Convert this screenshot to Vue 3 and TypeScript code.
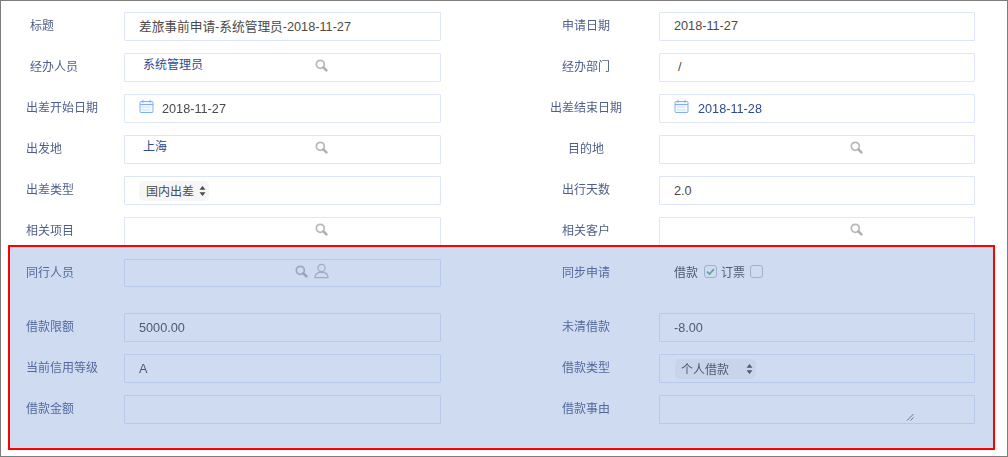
<script setup lang="ts">
type Kind = 'text' | 'lookup' | 'date' | 'select' | 'checks' | 'area' | 'people'
interface Field {
  label: string
  kind: Kind
  value?: string
  labelClass?: string
  valueClass?: string
}

const top: Field[] = [
  { label: '标题', kind: 'text', value: '差旅事前申请-系统管理员-2018-11-27', labelClass: 'inset', valueClass: 'raised' },
  { label: '申请日期', kind: 'text', value: '2018-11-27', valueClass: 'nudged' },
  { label: '经办人员', kind: 'lookup', value: '系统管理员', labelClass: 'inset' },
  { label: '经办部门', kind: 'text', value: '/', valueClass: 'slash' },
  { label: '出差开始日期', kind: 'date', value: '2018-11-27' },
  { label: '出差结束日期', kind: 'date', value: '2018-11-28', valueClass: 'blue' },
  { label: '出发地', kind: 'lookup', value: '上海' },
  { label: '目的地', kind: 'lookup' },
  { label: '出差类型', kind: 'select', value: '国内出差' },
  { label: '出行天数', kind: 'text', value: '2.0' },
  { label: '相关项目', kind: 'lookup' },
  { label: '相关客户', kind: 'lookup' },
  { label: '同行人员', kind: 'people' },
  { label: '同步申请', kind: 'checks' },
]
const bottom: Field[] = [
  { label: '借款限额', kind: 'text', value: '5000.00' },
  { label: '未清借款', kind: 'text', value: '-8.00' },
  { label: '当前信用等级', kind: 'text', value: 'A' },
  { label: '借款类型', kind: 'select', value: '个人借款', valueClass: 'wide' },
  { label: '借款金额', kind: 'text' },
  { label: '借款事由', kind: 'area' },
]
const sections = [
  { id: 'top', fields: top },
  { id: 'bottom', fields: bottom },
]
</script>

<template>
  <div class="page">
    <section v-for="s in sections" :key="s.id" class="grid" :class="s.id">
      <template v-for="(f, i) in s.fields" :key="f.label">
        <div class="label" :class="[i % 2 ? 'right' : 'left', f.labelClass]">{{ f.label }}</div>

        <div v-if="f.kind === 'checks'" class="checks">
          <span>借款</span>
          <span class="box first"><svg viewBox="0 0 13 13" width="13" height="13"><path d="M3 6.6 5.5 9 10 4.2" fill="none" stroke="#5cb87a" stroke-width="1.7" /></svg></span>
          <span class="second">订票</span>
          <span class="box"></span>
        </div>

        <div v-else class="input">
          <template v-if="f.kind === 'text'">
            <span class="value" :class="f.valueClass">{{ f.value }}</span>
          </template>

          <template v-else-if="f.kind === 'lookup' || f.kind === 'people'">
            <span class="link">{{ f.value }}</span>
            <svg class="search" :class="{ shifted: f.kind === 'people' }" viewBox="0 0 13 13" width="13" height="13">
              <circle cx="5.3" cy="5.3" r="4" fill="none" stroke="#b8b8b8" stroke-width="1.7" />
              <path d="M8.4 8.4 11.4 11.4" stroke="#b0b0b0" stroke-width="2.6" stroke-linecap="round" />
            </svg>
            <svg v-if="f.kind === 'people'" class="person" viewBox="0 0 15 16" width="15" height="16">
              <circle cx="7.5" cy="5" r="3.6" fill="none" stroke="#bcbcbc" stroke-width="1.2" />
              <path d="M1 14.6c0-3 2.2-4.8 4.3-5.3h4.4c2.1.5 4.3 2.3 4.3 5.3z" fill="none" stroke="#bcbcbc" stroke-width="1.2" />
            </svg>
          </template>

          <template v-else-if="f.kind === 'date'">
            <svg class="calendar" viewBox="0 0 15 15" width="15" height="15">
              <rect x="1" y="2.5" width="13" height="11" rx="1" fill="#f3f8ff" stroke="#7fb0f7" />
              <path d="M1 5.5h13" stroke="#7fb0f7" />
              <path d="M4 .8v3M11 .8v3" stroke="#7fb0f7" />
              <path d="M3.5 8h8M3.5 11h8" stroke="#a9c9f8" stroke-dasharray="1 1" />
            </svg>
            <span class="date" :class="f.valueClass">{{ f.value }}</span>
          </template>

          <template v-else-if="f.kind === 'select'">
            <span class="select" :class="f.valueClass">
              <span class="select-text">{{ f.value }}</span>
              <svg viewBox="0 0 7 10" width="7" height="10"><path d="M3.5 0 6.5 3.8H.5zM3.5 10 .5 6.2h6z" fill="#4a4a4a" /></svg>
            </span>
          </template>

          <template v-else-if="f.kind === 'area'">
            <svg class="grip" viewBox="0 0 8 8" width="8" height="8"><path d="M1 7.5 7.5 1M4.5 7.5 7.5 4.5" stroke="#6f6f6f" stroke-width="1" /></svg>
          </template>
        </div>
      </template>
    </section>
    <div class="highlight"></div>
  </div>
</template>

<style scoped>
.page {
  position: relative;
  box-sizing: border-box;
  width: 1008px;
  height: 457px;
  padding-top: 11px;
  border: 1px solid #7d7d7d;
  background: #fff;
  font-family: "Liberation Sans", "Noto Sans CJK SC", sans-serif;
  overflow: hidden;
}
.grid {
  display: grid;
  grid-template-columns: 123px 317px 218px 316px;
  grid-auto-rows: 28.5px;
  row-gap: 12.6px;
  align-items: stretch;
  filter: blur(0.35px);
}
.bottom {
  margin-top: 26.2px;
}
.label {
  padding-top: 2px;
  font-size: 12px;
  line-height: 24px;
  color: #4f5f8b;
}
.left {
  padding-left: 25px;
}
.left.inset {
  padding-left: 29px;
}
.right {
  padding-left: 72px;
  text-align: center;
}
.input {
  position: relative;
  box-sizing: border-box;
  display: flex;
  align-items: center;
  padding-left: 14px;
  border: 1px solid #dde5f6;
  border-radius: 1px;
  font-size: 12.7px;
  color: #4a4a4a;
  background: #fff;
}
.value.slash {
  padding-left: 4px;
}
.value.raised {
  margin-top: -2px;
}
.value.nudged {
  margin-top: 0;
}
.link {
  align-self: flex-start;
  margin: 3px 0 0 4px;
  font-size: 12px;
  line-height: 17px;
  color: #2f4a8f;
}
.search {
  position: absolute;
  left: 190px;
  top: 5px;
}
.search.shifted {
  left: 170px;
}
.person {
  position: absolute;
  left: 189px;
  top: 3.5px;
}
.calendar {
  margin-top: -3px;
  margin-right: 8px;
}
.date {
  margin-top: 1px;
}
.date.blue {
  margin-left: 1px;
  color: #2f4a8f;
}
.select {
  display: inline-flex;
  align-items: center;
  gap: 5px;
  box-sizing: border-box;
  height: 20px;
  padding: 0 3px 0 7px;
  border-radius: 5px;
  background: #f6f6f6;
  font-size: 12px;
}
.select-text {
  margin-top: -1px;
}
.select.wide {
  gap: 17px;
  padding: 0 3px 0 6px;
  margin-left: 1px;
}
.checks {
  display: flex;
  align-items: center;
  height: 25px;
  padding-left: 15px;
  font-size: 12px;
  color: #4a4a4a;
}
.box {
  box-sizing: border-box;
  display: block;
  width: 13px;
  height: 13px;
  margin-left: 5px;
  border: 1px solid #bcc1cc;
  border-radius: 3px;
  background: #fff;
}
.box.first {
  margin-left: 6px;
}
.box svg {
  display: block;
  margin: -1px;
}
.second {
  margin-left: 4px;
}
.grip {
  position: absolute;
  left: 246px;
  top: 17px;
}
.highlight {
  position: absolute;
  left: 7px;
  top: 244px;
  box-sizing: border-box;
  width: 987px;
  height: 205px;
  border: 2px solid #f00;
  background: rgba(88, 132, 208, 0.29);
  pointer-events: none;
}
</style>
